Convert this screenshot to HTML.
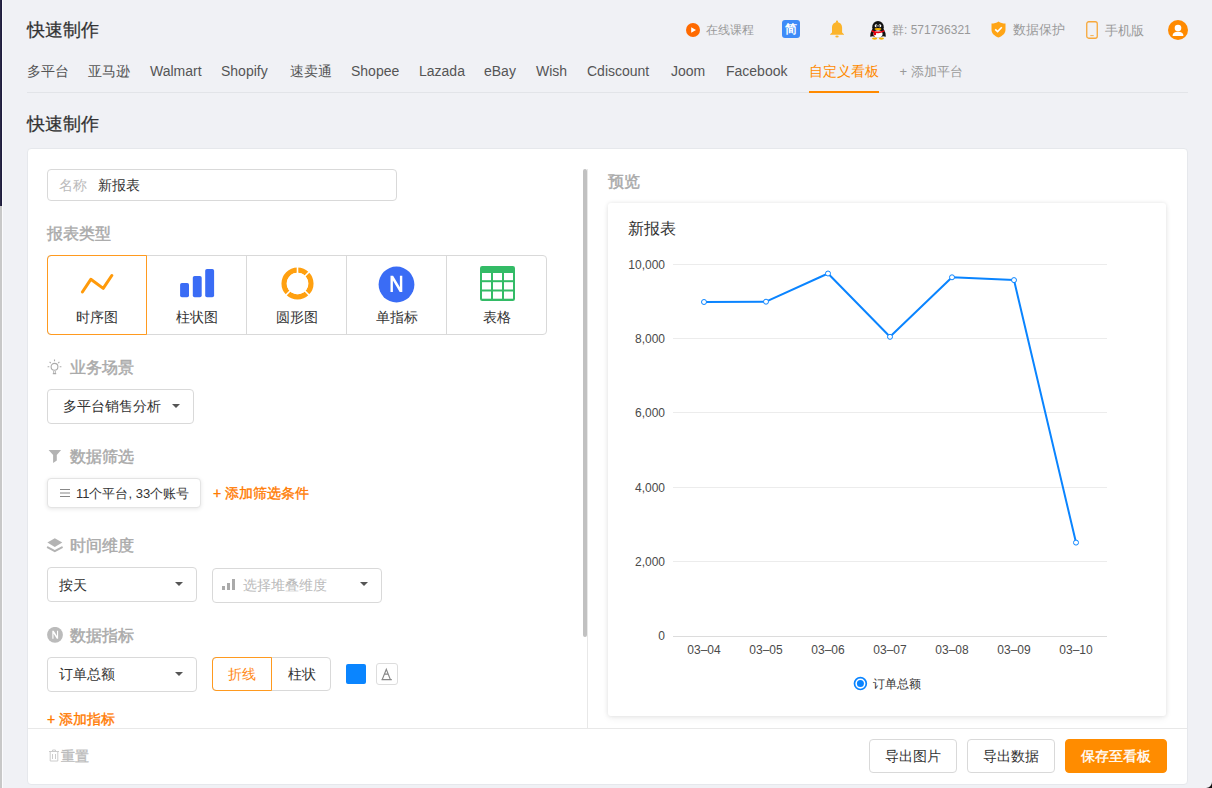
<!DOCTYPE html>
<html><head><meta charset="utf-8">
<style>
*{margin:0;padding:0;box-sizing:border-box}
html,body{width:1212px;height:788px;overflow:hidden}
body{background:#f0f1f5;font-family:"Liberation Sans",sans-serif;color:#333;position:relative}
.a{position:absolute;white-space:nowrap}
.t{line-height:1}
.stripe1{left:0;top:0;width:2px;height:206px;background:linear-gradient(90deg,#2a2846 50%,#1e1c3e 50%)}
.stripe2{left:0;top:206px;width:2px;height:582px;background:#c8c8c8}
.stripe3{left:2px;top:0;width:1px;height:788px;background:#fbfbfd}
.h1{font-size:17.6px;color:#333;font-weight:normal;-webkit-text-stroke:0.25px #333}
.hr{font-size:12px;color:#999}
.nav{font-size:14px;color:#555;top:63px;line-height:16px}
.card{left:27px;top:148px;width:1161px;height:637px;background:#fff;border:1px solid #e6e8ec;border-radius:4px}
.sec{font-size:16px;color:#aaa;font-weight:normal;-webkit-text-stroke:0.45px #aaa;line-height:16px}
.box{border:1px solid #d9d9d9;border-radius:4px;background:#fff}
.caret{width:0;height:0;border-left:4px solid transparent;border-right:4px solid transparent;border-top:4.5px solid #555}
.cell{top:255px;height:79px;width:100px;border:1px solid #d9d9d9;background:#fff}
.cl{font-size:14px;color:#333;line-height:14px;top:310px;text-align:center;width:100px}
.orange{color:#ff7a00}
.btn{border:1px solid #d9d9d9;border-radius:4px;background:#fff;font-size:14px;color:#333;text-align:center;line-height:32px}
.ax{font-size:12px;color:#444;line-height:12px}
</style></head><body>
<div class="a stripe1"></div><div class="a stripe2"></div><div class="a stripe3"></div>

<!-- header -->
<div class="a t h1" style="left:27px;top:22px">快速制作</div>

<svg class="a" style="left:686px;top:23px" width="14" height="14" viewBox="0 0 14 14"><circle cx="7" cy="7" r="7" fill="#ff6a00"/><path d="M5.2 4.2 L10 7 L5.2 9.8Z" fill="#fff"/></svg>
<div class="a t hr" style="left:706px;top:24px">在线课程</div>

<svg class="a" style="left:782px;top:20px" width="18" height="18" viewBox="0 0 18 18"><rect width="18" height="18" rx="3" fill="#3e8bf8"/><text x="9.3" y="13.4" font-size="11.5" font-weight="bold" fill="#fff" text-anchor="middle" font-family="Liberation Sans, sans-serif">简</text></svg>

<svg class="a" style="left:829px;top:20px" width="16" height="18" viewBox="0 0 16 18"><rect x="7" y="0.6" width="2" height="2.4" rx="0.8" fill="#fbb42b"/><path d="M8 2.2 C11.3 2.2 13.1 4.6 13.1 7.8 L13.1 12.4 L15 14.2 V14.8 H1.1 V14.2 L3 12.4 L3 7.8 C3 4.6 4.7 2.2 8 2.2Z" fill="#fbb42b"/><ellipse cx="8" cy="16.5" rx="1.7" ry="0.9" fill="#fbb42b"/></svg>

<svg class="a" style="left:869px;top:20px" width="18" height="20" viewBox="0 0 18 20">
<path d="M3.5 9 Q0.8 13 1.2 16.8 L4 16.3 Q9 18.8 14 16.3 L16.8 16.8 Q17.2 13 14.5 9Z" fill="#111"/>
<ellipse cx="9" cy="7.2" rx="5.8" ry="6.3" fill="#111"/>
<ellipse cx="9" cy="14" rx="4.6" ry="3.8" fill="#fff"/>
<ellipse cx="7.1" cy="5.8" rx="1.4" ry="1.5" fill="#fff"/><ellipse cx="10.9" cy="5.8" rx="1.4" ry="1.5" fill="#fff"/>
<circle cx="7.5" cy="6" r=".65" fill="#111"/><circle cx="10.5" cy="6" r=".65" fill="#111"/>
<ellipse cx="9" cy="9" rx="3.4" ry="1.1" fill="#f5b400"/>
<path d="M2.6 10 Q9 13.2 15.4 10 L15.2 11.8 Q9 14.6 2.8 11.8Z" fill="#e8000f"/>
<path d="M4.8 11.8 L4.6 15.5 L7 15 L7.2 12.6Z" fill="#e8000f"/>
<ellipse cx="5.6" cy="18.6" rx="2.6" ry="1.1" fill="#f5b400"/><ellipse cx="12.4" cy="18.6" rx="2.6" ry="1.1" fill="#f5b400"/>
</svg>
<div class="a t hr" style="left:892px;top:24px;font-size:12px">群: 571736321</div>

<svg class="a" style="left:991px;top:21px" width="15" height="17" viewBox="0 0 15 17"><path d="M7.5 0.5 C9.5 2 11.8 2.6 14.5 2.6 L14.5 8.5 C14.5 12.5 11.5 15 7.5 16.5 C3.5 15 0.5 12.5 0.5 8.5 L0.5 2.6 C3.2 2.6 5.5 2 7.5 0.5Z" fill="#ffa516"/><path d="M4.2 8.3 L6.6 10.6 L10.8 6.2" stroke="#fff" stroke-width="1.6" fill="none"/></svg>
<div class="a t hr" style="left:1013px;top:23px;font-size:13px">数据保护</div>

<svg class="a" style="left:1086px;top:21px" width="12" height="18" viewBox="0 0 12 18"><rect x="0.75" y="0.75" width="10.5" height="16.5" rx="2" fill="none" stroke="#f7a83a" stroke-width="1.3"/><rect x="4.3" y="14.2" width="3.4" height="0.9" fill="#f7a83a"/></svg>
<div class="a t hr" style="left:1105px;top:23.5px;font-size:13px">手机版</div>

<svg class="a" style="left:1168px;top:20px" width="20" height="20" viewBox="0 0 20 20"><circle cx="10" cy="10" r="10" fill="#ff8a00"/><circle cx="10" cy="8" r="3.3" fill="#fff"/><path d="M4.6 16 C4.6 13 7 11.8 10 11.8 C13 11.8 15.4 13 15.4 16Z" fill="#fff"/></svg>

<!-- nav -->
<div class="a nav" style="left:27px">多平台</div>
<div class="a nav" style="left:88px">亚马逊</div>
<div class="a nav" style="left:150px">Walmart</div>
<div class="a nav" style="left:221px">Shopify</div>
<div class="a nav" style="left:290px">速卖通</div>
<div class="a nav" style="left:351px">Shopee</div>
<div class="a nav" style="left:419px">Lazada</div>
<div class="a nav" style="left:484px">eBay</div>
<div class="a nav" style="left:536px">Wish</div>
<div class="a nav" style="left:587px">Cdiscount</div>
<div class="a nav" style="left:671px">Joom</div>
<div class="a nav" style="left:726px">Facebook</div>
<div class="a nav" style="left:809px;color:#ff8a00">自定义看板</div>
<div class="a nav" style="left:899.5px;top:64px;color:#999;font-size:13px">+ 添加平台</div>
<div class="a" style="left:27px;top:92px;width:1161px;height:1px;background:#e2e4e8"></div>
<div class="a" style="left:809px;top:91px;width:70px;height:2px;background:#ff8a00"></div>

<div class="a t h1" style="left:27px;top:116px">快速制作</div>

<!-- card -->
<div class="a card"></div>

<!-- name input -->
<div class="a box" style="left:47px;top:169px;width:350px;height:32px"></div>
<div class="a t" style="left:59px;top:178px;font-size:14px;color:#bbb">名称</div>
<div class="a t" style="left:98px;top:178px;font-size:14px;color:#333">新报表</div>

<div class="a sec" style="left:47px;top:226px">报表类型</div>

<!-- chart types -->
<div class="a" style="left:47px;top:255px;width:500px;height:80px;border:1px solid #d9d9d9;border-radius:4px"></div>
<div class="a" style="left:146px;top:255px;width:1px;height:80px;background:#d9d9d9"></div>
<div class="a" style="left:246px;top:255px;width:1px;height:80px;background:#d9d9d9"></div>
<div class="a" style="left:346px;top:255px;width:1px;height:80px;background:#d9d9d9"></div>
<div class="a" style="left:446px;top:255px;width:1px;height:80px;background:#d9d9d9"></div>
<div class="a" style="left:47px;top:255px;width:100px;height:80px;border:1px solid #ff9a1f;border-radius:4px 0 0 4px"></div>

<svg class="a" style="left:80px;top:272px" width="34" height="22" viewBox="0 0 34 22"><path d="M2.4 20 L10.8 7.3 L23.2 16.4 L31.8 3.5" stroke="#ff9a0a" stroke-width="3" fill="none" stroke-linecap="round" stroke-linejoin="round"/></svg>
<svg class="a" style="left:179px;top:268px" width="36" height="30" viewBox="0 0 36 30"><rect x="1.1" y="15" width="8.9" height="14.3" rx="1.8" fill="#3a6cf5"/><rect x="13.8" y="8" width="8.9" height="21.3" rx="1.8" fill="#3a6cf5"/><rect x="26.2" y="0.9" width="8.9" height="28.4" rx="1.8" fill="#3a6cf5"/></svg>
<svg class="a" style="left:280px;top:266px" width="35" height="35" viewBox="0 0 35 35"><circle cx="17.5" cy="17.5" r="13.4" fill="none" stroke="#ffa010" stroke-width="5.3"/><g stroke="#fff" stroke-width="1.6"><path d="M17.5 17.5 L17.5 0"/><path d="M17.5 17.5 L30.5 4.5"/><path d="M17.5 17.5 L30.5 30.5"/><path d="M17.5 17.5 L4.5 30.5"/></g><circle cx="17.5" cy="17.5" r="10.75" fill="#fff"/></svg>
<svg class="a" style="left:378px;top:266px" width="37" height="37" viewBox="0 0 37 37"><circle cx="18.5" cy="18.5" r="17.9" fill="#3a6cf5"/><path d="M12.5 26 V9.8 H15.1 L21.9 21.3 V9.8 H24.3 V26 H21.7 L14.9 14.5 V26 Z" fill="#fff"/></svg>
<svg class="a" style="left:480px;top:266px" width="35" height="35" viewBox="0 0 35 35"><rect x="0" y="0" width="35" height="35" rx="2.2" fill="#33bb66"/><g fill="#fff"><rect x="2" y="7" width="9" height="7.2"/><rect x="13" y="7" width="9" height="7.2"/><rect x="24" y="7" width="9" height="7.2"/><rect x="2" y="16.2" width="9" height="7.3"/><rect x="13" y="16.2" width="9" height="7.3"/><rect x="24" y="16.2" width="9" height="7.3"/><rect x="2" y="25.5" width="9" height="7.2"/><rect x="13" y="25.5" width="9" height="7.2"/><rect x="24" y="25.5" width="9" height="7.2"/></g></svg>

<div class="a cl" style="left:47px">时序图</div>
<div class="a cl" style="left:147px">柱状图</div>
<div class="a cl" style="left:247px">圆形图</div>
<div class="a cl" style="left:347px">单指标</div>
<div class="a cl" style="left:447px">表格</div>

<!-- 业务场景 -->
<svg class="a" style="left:47px;top:359px" width="16" height="16" viewBox="0 0 16 16"><circle cx="7.5" cy="7.8" r="3.4" fill="none" stroke="#aaa" stroke-width="1.1"/><path d="M7.5 0.6 V2.3 M0.6 7.8 H2.3 M12.7 7.8 H14.4 M2.6 2.9 L3.8 4.1 M12.4 2.9 L11.2 4.1 M5.8 14.6 H9.2 M6.6 12.2 V13.8 M8.4 12.2 V13.8" stroke="#aaa" stroke-width="1.1" fill="none"/></svg>
<div class="a sec" style="left:70px;top:360px">业务场景</div>
<div class="a box" style="left:47px;top:389px;width:147px;height:35px"></div>
<div class="a t" style="left:63px;top:399px;font-size:14px;color:#333">多平台销售分析</div>
<div class="a caret" style="left:172px;top:404px"></div>

<!-- 数据筛选 -->
<svg class="a" style="left:47px;top:449px" width="16" height="15" viewBox="0 0 16 15"><path d="M1.6 1 H14.1 L9.8 6.1 V11.5 L6.1 13.9 V6.1 Z" fill="#b3b3b3"/></svg>
<div class="a sec" style="left:70px;top:449px">数据筛选</div>
<div class="a box" style="left:47px;top:478px;width:154px;height:30px;border-color:#e4e4e4;box-shadow:0 1px 4px rgba(0,0,0,.1)"></div>
<svg class="a" style="left:59px;top:488px" width="12" height="10" viewBox="0 0 12 10"><path d="M1 1.5 H11 M1 5 H11 M1 8.5 H11" stroke="#888" stroke-width="1.2"/></svg>
<div class="a t" style="left:76px;top:487px;font-size:13px;color:#333">11个平台, 33个账号</div>
<div class="a t orange" style="left:213px;top:486px;font-size:14px;-webkit-text-stroke:0.35px #ff7a00">+ 添加筛选条件</div>

<!-- 时间维度 -->
<svg class="a" style="left:46px;top:537px" width="18" height="16" viewBox="0 0 18 16"><path d="M8.8 1.2 L16.3 5.5 L8.8 9.9 L1.4 5.5Z" fill="#b3b3b3"/><path d="M1.8 10.4 L8.8 14.2 L15.9 10.4" stroke="#b3b3b3" stroke-width="2" fill="none" stroke-linejoin="round" stroke-linecap="round"/></svg>
<div class="a sec" style="left:70px;top:538px">时间维度</div>
<div class="a box" style="left:47px;top:567px;width:150px;height:35px"></div>
<div class="a t" style="left:59px;top:578px;font-size:14px;color:#333">按天</div>
<div class="a caret" style="left:175px;top:582px"></div>
<div class="a box" style="left:212px;top:568px;width:170px;height:35px"></div>
<svg class="a" style="left:222px;top:579px" width="14" height="11" viewBox="0 0 14 11"><rect x="0" y="7" width="3" height="4" fill="#aaa"/><rect x="5" y="4" width="3" height="7" fill="#aaa"/><rect x="10" y="0" width="3" height="11" fill="#aaa"/></svg>
<div class="a t" style="left:243px;top:578px;font-size:14px;color:#bbb">选择堆叠维度</div>
<div class="a caret" style="left:360px;top:582px"></div>

<!-- 数据指标 -->
<svg class="a" style="left:47px;top:627px" width="16" height="16" viewBox="0 0 16 16"><circle cx="8" cy="7.8" r="7.9" fill="#bbb"/><path d="M5.3 11.8 V3.8 H6.7 L10 9 V3.8 H11.1 V11.8 H9.8 L6.5 6.6 V11.8Z" fill="#fff"/></svg>
<div class="a sec" style="left:70px;top:628px">数据指标</div>
<div class="a box" style="left:47px;top:657px;width:150px;height:35px"></div>
<div class="a t" style="left:59px;top:667px;font-size:14px;color:#333">订单总额</div>
<div class="a caret" style="left:175px;top:672px"></div>
<div class="a box" style="left:212px;top:657px;width:119px;height:34px"></div>
<div class="a" style="left:212px;top:657px;width:60px;height:34px;border:1px solid #ff9a1f;border-radius:4px 0 0 4px"></div>
<div class="a t orange" style="left:228px;top:667px;font-size:14px;color:#ff8a1a">折线</div>
<div class="a t" style="left:288px;top:667px;font-size:14px;color:#333">柱状</div>
<div class="a" style="left:346px;top:664px;width:20px;height:20px;background:#0a85ff;border-radius:2px"></div>
<div class="a" style="left:376px;top:663px;width:22px;height:22px;border:1px solid #ddd;border-radius:3px"></div>
<svg class="a" style="left:380px;top:667px" width="14" height="14" viewBox="0 0 14 14"><path d="M2.2 12.6 L6.3 2.4 L10.4 12.6 M4.2 7.2 H8.4 M1.5 12.6 H11.8" stroke="#888" stroke-width="1.2" fill="none"/></svg>
<div class="a t orange" style="left:47px;top:712px;font-size:14px;-webkit-text-stroke:0.35px #ff7a00">+ 添加指标</div>

<!-- divider / scrollbar -->
<div class="a" style="left:587px;top:169px;width:1px;height:559px;background:#e8e8e8"></div>
<div class="a" style="left:583px;top:169px;width:4px;height:468px;background:#c1c1c1;border-radius:2px"></div>

<!-- footer -->
<div class="a" style="left:28px;top:728px;width:1159px;height:1px;background:#e8e8e8"></div>
<svg class="a" style="left:48px;top:749px" width="12" height="13" viewBox="0 0 12 13"><path d="M1 2.5 H11 M4.5 2.5 V1 H7.5 V2.5 M2.2 3 V12 H9.8 V3 M4.5 5 V10 M7.5 5 V10" stroke="#ccc" stroke-width="1" fill="none"/></svg>
<div class="a t" style="left:61px;top:749px;font-size:14px;color:#bbb;-webkit-text-stroke:0.35px #bbb">重置</div>

<div class="a btn" style="left:869px;top:739px;width:88px;height:34px">导出图片</div>
<div class="a btn" style="left:967px;top:739px;width:88px;height:34px">导出数据</div>
<div class="a btn" style="left:1065px;top:739px;width:102px;height:34px;background:#ff8c00;border-color:#ff8c00;color:#fff;-webkit-text-stroke:0.35px #fff">保存至看板</div>

<!-- preview -->
<div class="a sec" style="left:608px;top:174px">预览</div>
<div class="a" style="left:608px;top:203px;width:558px;height:513px;background:#fff;border-radius:3px;box-shadow:0 0 4px rgba(0,0,0,.1),0 3px 7px rgba(0,0,0,.05)"></div>
<div class="a t" style="left:628px;top:221px;font-size:16px;color:#333">新报表</div>

<svg class="a" style="left:608px;top:203px" width="558" height="513" viewBox="608 203 558 513">
<g stroke="#ececec" stroke-width="1">
<line x1="673" y1="264.5" x2="1107" y2="264.5"/>
<line x1="673" y1="338.5" x2="1107" y2="338.5"/>
<line x1="673" y1="412.5" x2="1107" y2="412.5"/>
<line x1="673" y1="487.5" x2="1107" y2="487.5"/>
<line x1="673" y1="561.5" x2="1107" y2="561.5"/>
</g>
<line x1="673" y1="636.5" x2="1107" y2="636.5" stroke="#dcdcdc" stroke-width="1"/>
<g font-size="12" fill="#4a4a4a" text-anchor="end" font-family="Liberation Sans, sans-serif">
<text x="665" y="268.5">10,000</text>
<text x="665" y="342.5">8,000</text>
<text x="665" y="416.5">6,000</text>
<text x="665" y="491.5">4,000</text>
<text x="665" y="565.5">2,000</text>
<text x="665" y="640">0</text>
</g>
<g font-size="12" fill="#4a4a4a" text-anchor="middle" font-family="Liberation Sans, sans-serif">
<text x="704" y="654">03–04</text>
<text x="766" y="654">03–05</text>
<text x="828" y="654">03–06</text>
<text x="890" y="654">03–07</text>
<text x="952" y="654">03–08</text>
<text x="1014" y="654">03–09</text>
<text x="1076" y="654">03–10</text>
</g>
<polyline points="704,302 766,301.7 828,273.5 890,336.8 952,277.3 1014,280.1 1076,542.6" fill="none" stroke="#0a84ff" stroke-width="2" stroke-linejoin="round"/>
<g fill="#fff" stroke="#0a84ff" stroke-width="1">
<circle cx="704" cy="302" r="2.5"/><circle cx="766" cy="301.7" r="2.5"/><circle cx="828" cy="273.5" r="2.5"/><circle cx="890" cy="336.8" r="2.5"/><circle cx="952" cy="277.3" r="2.5"/><circle cx="1014" cy="280.1" r="2.5"/><circle cx="1076" cy="542.6" r="2.5"/>
</g>
<circle cx="860.4" cy="683.6" r="5.9" fill="#fff" stroke="#0a84ff" stroke-width="1.7"/>
<circle cx="860.4" cy="683.6" r="3.5" fill="#0a84ff"/>
</svg>
<div class="a t" style="left:873px;top:678px;font-size:12px;color:#333">订单总额</div>

<svg class="a" style="left:1206px;top:782px" width="6" height="6" viewBox="0 0 6 6"><path d="M6 0 V6 H0 A6 6 0 0 0 6 0Z" fill="#111"/></svg>
</body></html>
